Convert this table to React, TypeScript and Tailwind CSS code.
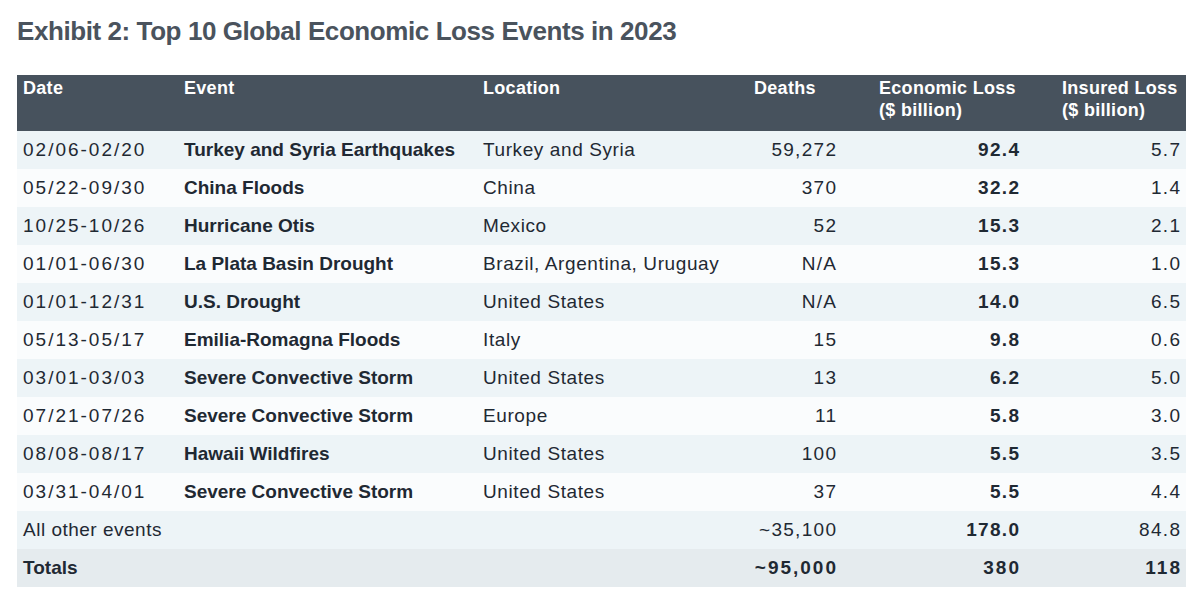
const rows = [
  ['02/06-02/20', 'Turkey and Syria Earthquakes', 'Turkey and Syria', '59,272', '92.4', '5.7'],
  ['05/22-09/30', 'China Floods', 'China', '370', '32.2', '1.4'],
  ['10/25-10/26', 'Hurricane Otis', 'Mexico', '52', '15.3', '2.1'],
  ['01/01-06/30', 'La Plata Basin Drought', 'Brazil, Argentina, Uruguay', 'N/A', '15.3', '1.0'],
  ['01/01-12/31', 'U.S. Drought', 'United States', 'N/A', '14.0', '6.5'],
  ['05/13-05/17', 'Emilia-Romagna Floods', 'Italy', '15', '9.8', '0.6'],
  ['03/01-03/03', 'Severe Convective Storm', 'United States', '13', '6.2', '5.0'],
  ['07/21-07/26', 'Severe Convective Storm', 'Europe', '11', '5.8', '3.0'],
  ['08/08-08/17', 'Hawaii Wildfires', 'United States', '100', '5.5', '3.5'],
  ['03/31-04/01', 'Severe Convective Storm', 'United States', '37', '5.5', '4.4'],
];

// right-aligned number; the negative margin cancels the trailing letter-spacing
function Num({ children }: { children: string }) {
  return <span className="tracking-[1.3px] -mr-[1.3px]">{children}</span>;
}

function BoldNum({ children }: { children: string }) {
  return <span className="tracking-[2px] -mr-[2px]">{children}</span>;
}

export default function App() {
  return (
    <div
      className="w-[1200px] h-[613px] bg-white px-[17px] pt-[14px] text-[#1f2933]"
      style={{ fontFamily: '"Liberation Sans", Arial, sans-serif' }}
    >
      <h1 className="text-[26px] font-bold leading-[34px] tracking-[-0.42px] text-[#4a535d]">
        Exhibit 2: Top 10 Global Economic Loss Events in 2023
      </h1>

      <table className="mt-[27px] w-[1169px] table-fixed border-collapse text-[19px]">
        <thead>
          <tr className="bg-[#47525d] text-white align-top h-[56px] text-[18px] tracking-[0.3px]">
            <th className="w-[167px] pl-[6px] pt-[2px] text-left font-bold leading-[22px]">Date</th>
            <th className="w-[299px] text-left font-bold leading-[22px] pt-[2px]">Event</th>
            <th className="w-[271px] text-left font-bold leading-[22px] pt-[2px]">Location</th>
            <th className="w-[82px] text-left font-bold leading-[22px] pt-[2px]">Deaths</th>
            <th className="w-[183px] text-left pl-[43px] font-bold leading-[22px] pt-[2px]">
              Economic Loss
              <br />
              ($ billion)
            </th>
            <th className="w-[167px] text-left pl-[43px] font-bold leading-[22px] pt-[2px]">
              Insured Loss
              <br />
              ($ billion)
            </th>
          </tr>
        </thead>
        <tbody>
          {rows.map((r, i) => (
            <tr key={i} className={`h-[38px] ${i % 2 === 0 ? 'bg-[#edf4f7]' : 'bg-[#fafcfd]'}`}>
              <td className="pl-[6px] tracking-[2px]">{r[0]}</td>
              <td className="font-bold">{r[1]}</td>
              <td className="tracking-[0.6px] whitespace-nowrap">{r[2]}</td>
              <td className="text-right"><Num>{r[3]}</Num></td>
              <td className="text-right font-bold"><Num>{r[4]}</Num></td>
              <td className="text-right pr-[6px]"><Num>{r[5]}</Num></td>
            </tr>
          ))}
          <tr className="h-[38px] bg-[#edf4f7]">
            <td className="pl-[6px] tracking-[0.5px] whitespace-nowrap" colSpan={3}>All other events</td>
            <td className="text-right"><Num>~35,100</Num></td>
            <td className="text-right font-bold"><Num>178.0</Num></td>
            <td className="text-right pr-[6px]"><Num>84.8</Num></td>
          </tr>
          <tr className="h-[38px] bg-[#e5ebee] font-bold">
            <td className="pl-[6px]" colSpan={3}>Totals</td>
            <td className="text-right"><BoldNum>~95,000</BoldNum></td>
            <td className="text-right"><BoldNum>380</BoldNum></td>
            <td className="text-right pr-[6px]"><BoldNum>118</BoldNum></td>
          </tr>
        </tbody>
      </table>
    </div>
  );
}
